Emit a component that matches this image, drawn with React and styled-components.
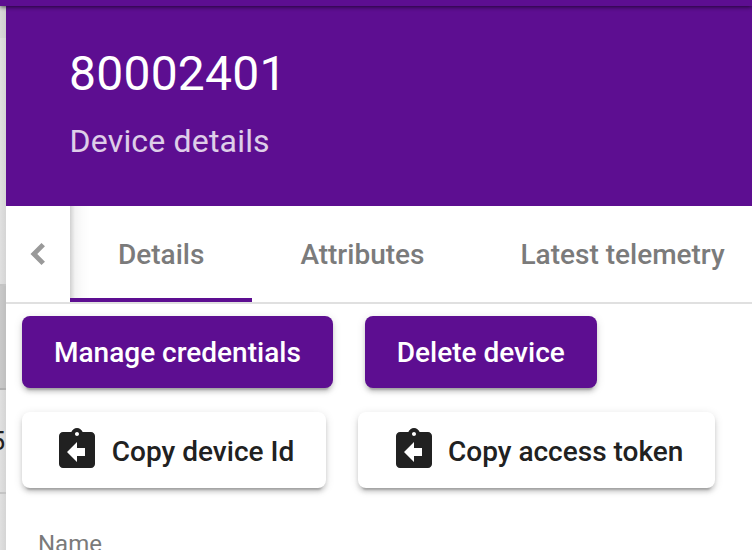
import React from "react";
import styled, { createGlobalStyle } from "styled-components";

const PURPLE = "#5d0e91";

const GlobalStyle = createGlobalStyle`
  * { box-sizing: border-box; }
  body { margin: 0; background: #fff; font-family: Roboto, sans-serif; }
`;

const Page = styled.div`
  width: 752px;
  height: 550px;
  overflow: hidden;
  display: grid;
  grid-template: 6px 544px / 6px 746px;
`;

const TopBar = styled.div`
  grid-column: 1 / 3;
  z-index: 3;
  background: ${PURPLE};
  box-shadow: 0 1px 4px rgba(0, 0, 0, 0.65);
`;

const Backdrop = styled.div`
  overflow: hidden;
  color: #202020;
  display: flex;
  flex-direction: column;
`;

const BackdropRow = styled.div`
  flex: none;
  height: ${(p) => p.$height}px;
  padding-right: 1px;
  background: linear-gradient(90deg, rgba(0, 0, 0, 0), rgba(0, 0, 0, 0.05)), ${(p) => p.$color};
  border-bottom: ${(p) => (p.$line ? `2px solid ${p.$line}` : "none")};
  display: flex;
  align-items: center;
  justify-content: flex-end;
  font-size: 26px;
`;

const Panel = styled.main`
  background: #fff;
  min-width: 0;
  overflow: hidden;
`;

const Header = styled.header`
  height: 200px;
  padding: 36px 63px 0;
  background: ${PURPLE};
  color: #fff;
`;

const Title = styled.h1`
  margin: 0;
  font-size: 48px;
  font-weight: 400;
  line-height: 64px;
  letter-spacing: 0.24px;
`;

const Subtitle = styled.div`
  margin: 19px 0 0 0.6px;
  font-size: 32px;
  line-height: 32px;
  letter-spacing: 0.18px;
  opacity: 0.8;
`;

const TabBar = styled.nav`
  height: 98px;
  display: flex;
  border-bottom: 2px solid #e0e0e0;
`;

const PrevButton = styled.button`
  flex: none;
  width: 64px;
  padding: 0;
  border: 0;
  background: #fff;
  color: #999;
  display: grid;
  place-items: center;
`;

const TabList = styled.div`
  flex: 1;
  display: flex;
  overflow: hidden;
  background: linear-gradient(90deg, rgba(0, 0, 0, 0.18), rgba(0, 0, 0, 0.05) 5px, rgba(0, 0, 0, 0.015) 12px, transparent 20px);
`;

const Tab = styled.div`
  flex: none;
  padding: 0 48px;
  line-height: 97px;
  font-size: 28px;
  font-weight: 500;
  color: #7b7b7b;
  box-shadow: ${(p) => (p.$active ? `inset 0 -4px ${PURPLE}` : "none")};
`;

const Actions = styled.div`
  padding: 12px 16px 0;
  display: flex;
  flex-direction: column;
  gap: 24px;
`;

const ActionRow = styled.div`
  display: flex;
  gap: 32px;
`;

const Button = styled.button`
  height: ${(p) => (p.$primary ? 72 : 76)}px;
  padding: ${(p) => (p.$primary ? "0 32px" : "0 32px 0 31.45px")};
  border: 0;
  border-radius: 8px;
  background: ${(p) => (p.$primary ? PURPLE : "#fff")};
  color: ${(p) => (p.$primary ? "#fff" : "#212121")};
  font: 500 28px/72px Roboto, sans-serif;
  white-space: nowrap;
  display: flex;
  align-items: center;
  box-shadow:
    0 6px 2px -4px rgba(0, 0, 0, 0.2),
    0 4px 4px rgba(0, 0, 0, 0.14),
    0 2px 10px rgba(0, 0, 0, 0.12);

  svg {
    margin-right: 10.4px;
  }
`;

const ButtonLabel = styled.span`
  padding-top: ${(p) => (p.$withIcon ? 4 : 2)}px;
`;

const FieldLabel = styled.div`
  margin: 42px 0 0 32px;
  font-size: 24px;
  line-height: 28px;
  color: #7a7a7a;
`;

function ClipboardReturnIcon() {
  return (
    <svg width="48" height="48" viewBox="0 0 24 24" fill="currentColor">
      <path d="M19 3h-4.180C14.400 1.840 13.300 1 12 1s-2.400.84-2.820 2H5c-1.100 0-2 .9-2 2v14c0 1.100.9 2 2 2h14c1.100 0 2-.9 2-2V5c0-1.100-.9-2-2-2zm-7 0c.55 0 1 .45 1 1s-.45 1-1 1-1-.45-1-1 .45-1 1-1zm4 12h-4v3l-5-5 5-5v3h4v4z" />
    </svg>
  );
}

export default function App() {
  return (
    <Page>
      <GlobalStyle />
      <TopBar />
      <Backdrop>
        <BackdropRow $height={32} $color="#d9d9d9" />
        <BackdropRow $height={248} $color="#e0e0e0" $line="#c4c4c4" />
        <BackdropRow $height={104} $color="#c9c9c9" $line="#b0b0b0" />
        <BackdropRow $height={104} $color="#e0e0e0" $line="#c4c4c4">5</BackdropRow>
        <BackdropRow $height={56} $color="#e0e0e0" />
      </Backdrop>
      <Panel>
        <Header>
          <Title>80002401</Title>
          <Subtitle>Device details</Subtitle>
        </Header>
        <TabBar>
          <PrevButton aria-label="Previous tabs">
            <svg width="44" height="44" viewBox="0 0 24 24" fill="currentColor">
              <path d="M15.800 7.800 13.900 6l-6 6 6 6 1.900-1.800L11.600 12z" />
            </svg>
          </PrevButton>
          <TabList>
            <Tab $active>Details</Tab>
            <Tab>Attributes</Tab>
            <Tab>Latest telemetry</Tab>
          </TabList>
        </TabBar>
        <Actions>
          <ActionRow>
            <Button $primary><ButtonLabel>Manage credentials</ButtonLabel></Button>
            <Button $primary><ButtonLabel>Delete device</ButtonLabel></Button>
          </ActionRow>
          <ActionRow>
            <Button><ClipboardReturnIcon /><ButtonLabel $withIcon>Copy device Id</ButtonLabel></Button>
            <Button><ClipboardReturnIcon /><ButtonLabel $withIcon>Copy access token</ButtonLabel></Button>
          </ActionRow>
        </Actions>
        <FieldLabel>Name</FieldLabel>
      </Panel>
    </Page>
  );
}
